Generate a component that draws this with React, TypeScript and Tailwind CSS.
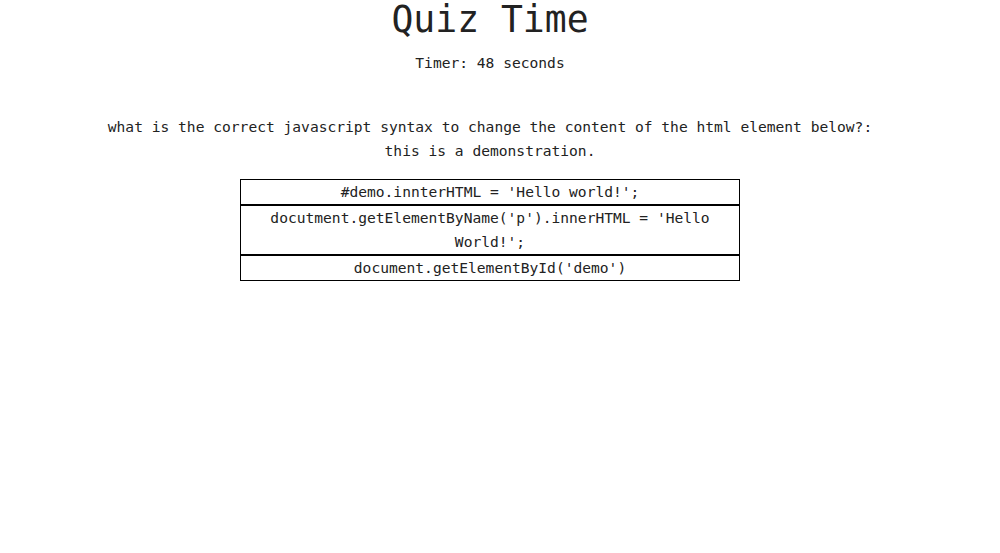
export default function App() {
  const options = [
    "#demo.innterHTML = 'Hello world!';",
    "docutment.getElementByName('p').innerHTML = 'Hello World!';",
    "document.getElementById('demo')",
  ];
  return (
    <div className="w-[1000px] h-[553px] bg-white">
      <div
        className="w-[980px] text-[#222] flex flex-col items-center"
        style={{ fontFamily: '"DejaVu Sans Mono", "Liberation Mono", monospace' }}
      >
        <h1 className="text-[36.4px] leading-[40px] font-normal m-0">Quiz Time</h1>
        <div className="mt-[11px] text-[14.6px] leading-[24px]">Timer: 48 seconds</div>
        <div className="mt-[40px] w-[800px] text-center text-[14.6px] leading-[24px]">
          what is the correct javascript syntax to change the content of the html element below?: this is a demonstration.
        </div>
        <div className="mt-[16px] w-[500px] flex flex-col">
          {options.map((o) => (
            <div
              key={o}
              className="border border-black text-center text-[14.6px] leading-[24px]"
            >
              {o}
            </div>
          ))}
        </div>
      </div>
    </div>
  );
}
